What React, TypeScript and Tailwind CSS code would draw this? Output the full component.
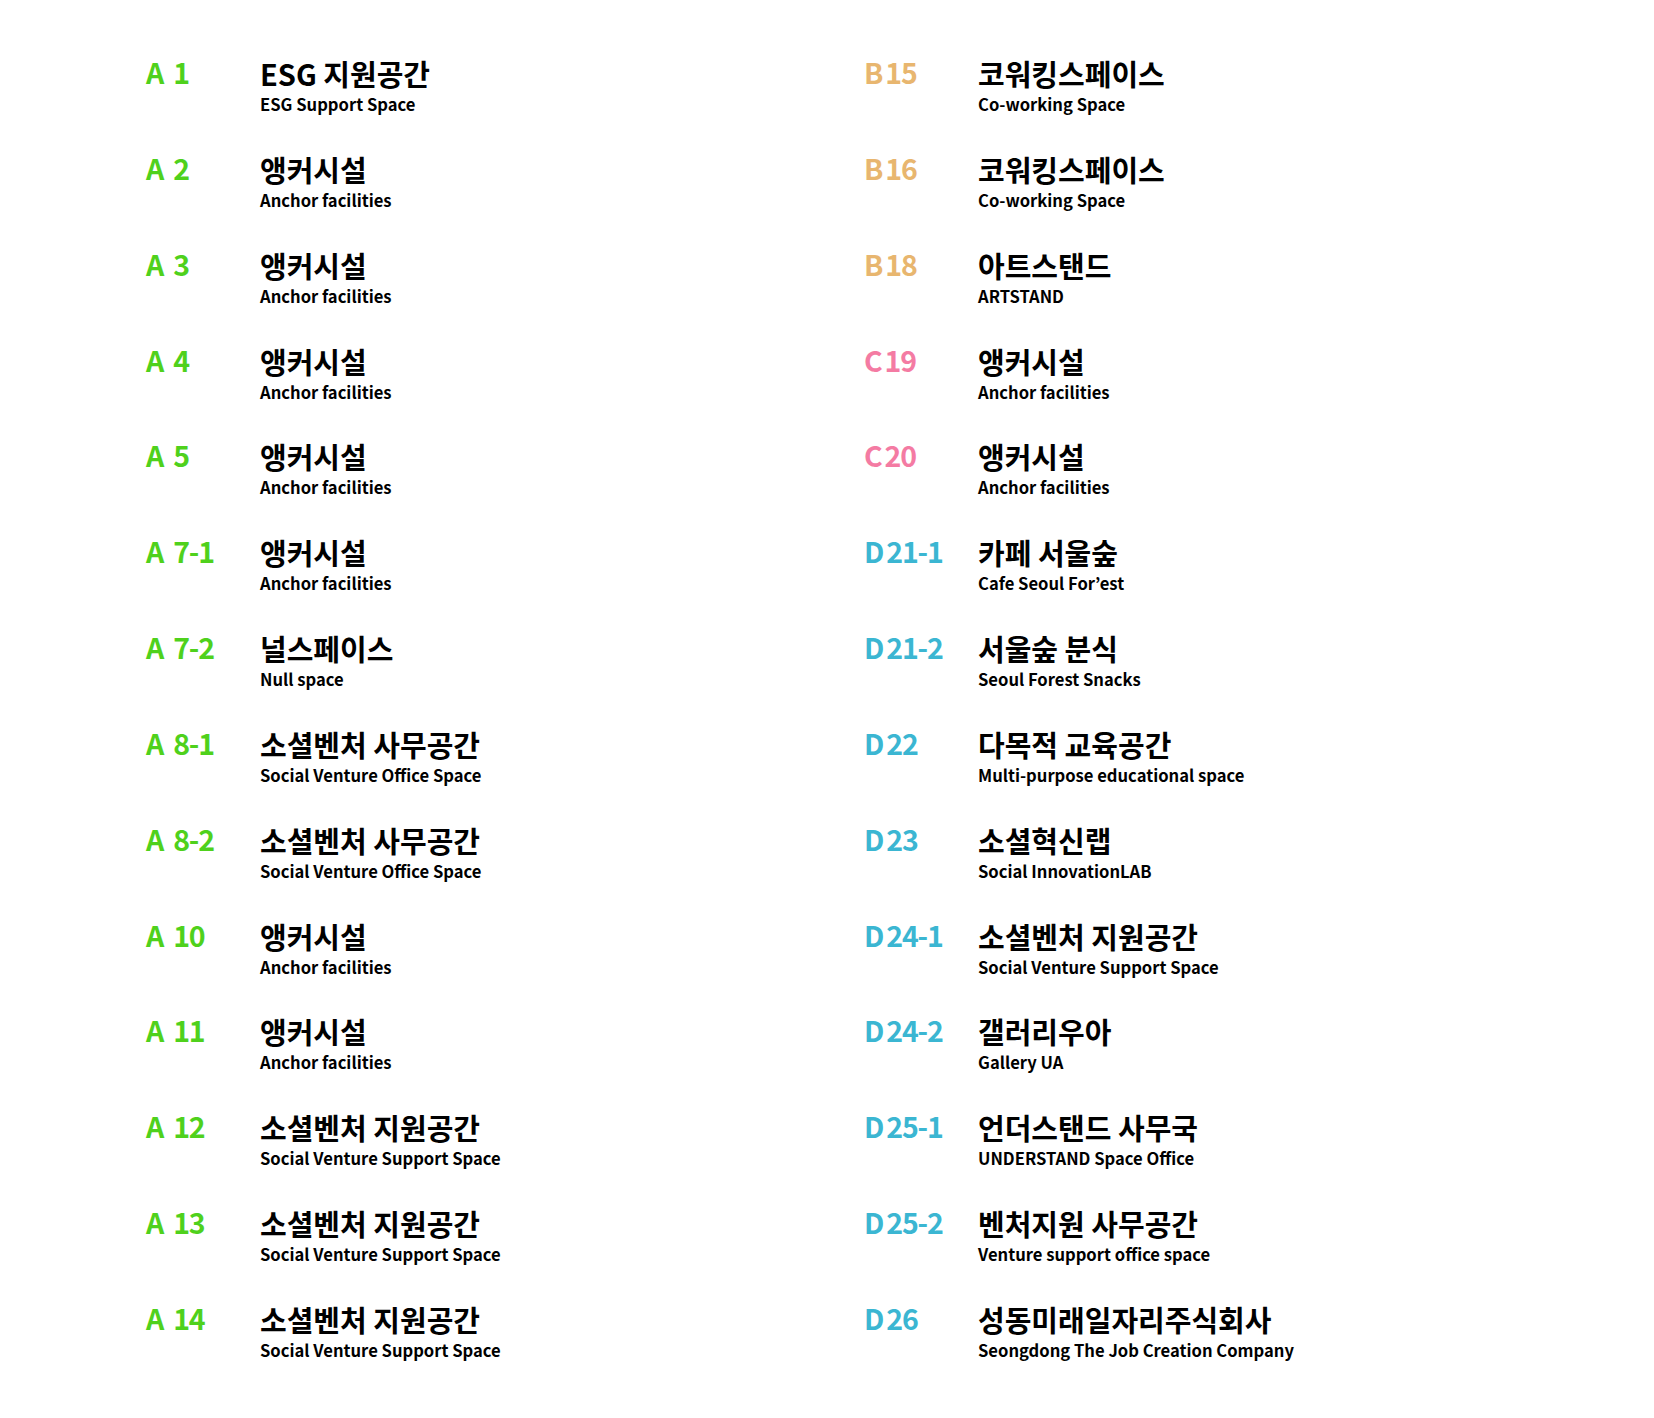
const LEFT = [
  { code: "A", num: "1", ko: "ESG 지원공간", en: "ESG Support Space" },
  { code: "A", num: "2", ko: "앵커시설", en: "Anchor facilities" },
  { code: "A", num: "3", ko: "앵커시설", en: "Anchor facilities" },
  { code: "A", num: "4", ko: "앵커시설", en: "Anchor facilities" },
  { code: "A", num: "5", ko: "앵커시설", en: "Anchor facilities" },
  { code: "A", num: "7-1", ko: "앵커시설", en: "Anchor facilities" },
  { code: "A", num: "7-2", ko: "널스페이스", en: "Null space" },
  { code: "A", num: "8-1", ko: "소셜벤처 사무공간", en: "Social Venture Office Space" },
  { code: "A", num: "8-2", ko: "소셜벤처 사무공간", en: "Social Venture Office Space" },
  { code: "A", num: "10", ko: "앵커시설", en: "Anchor facilities" },
  { code: "A", num: "11", ko: "앵커시설", en: "Anchor facilities" },
  { code: "A", num: "12", ko: "소셜벤처 지원공간", en: "Social Venture Support Space" },
  { code: "A", num: "13", ko: "소셜벤처 지원공간", en: "Social Venture Support Space" },
  { code: "A", num: "14", ko: "소셜벤처 지원공간", en: "Social Venture Support Space" },
];

const RIGHT = [
  { code: "B", num: "15", ko: "코워킹스페이스", en: "Co-working Space" },
  { code: "B", num: "16", ko: "코워킹스페이스", en: "Co-working Space" },
  { code: "B", num: "18", ko: "아트스탠드", en: "ARTSTAND" },
  { code: "C", num: "19", ko: "앵커시설", en: "Anchor facilities" },
  { code: "C", num: "20", ko: "앵커시설", en: "Anchor facilities" },
  { code: "D", num: "21-1", ko: "카페 서울숲", en: "Cafe Seoul For’est" },
  { code: "D", num: "21-2", ko: "서울숲 분식", en: "Seoul Forest Snacks" },
  { code: "D", num: "22", ko: "다목적 교육공간", en: "Multi-purpose educational space" },
  { code: "D", num: "23", ko: "소셜혁신랩", en: "Social InnovationLAB" },
  { code: "D", num: "24-1", ko: "소셜벤처 지원공간", en: "Social Venture Support Space" },
  { code: "D", num: "24-2", ko: "갤러리우아", en: "Gallery UA" },
  { code: "D", num: "25-1", ko: "언더스탠드 사무국", en: "UNDERSTAND Space Office" },
  { code: "D", num: "25-2", ko: "벤처지원 사무공간", en: "Venture support office space" },
  { code: "D", num: "26", ko: "성동미래일자리주식회사", en: "Seongdong The Job Creation Company" },
];

const codeColor: Record<string, string> = {
  A: "text-[#4fd11c]",
  B: "text-[#e8b66f]",
  C: "text-[#f47ba3]",
  D: "text-[#3bb6d2]",
};

function Row({ item }: { item: (typeof LEFT)[number] }) {
  const gap = item.code === "A" ? "mr-[10px]" : "mr-[3px]";
  return (
    <div className="flex h-[95.85px]">
      <div className={`w-[114px] shrink-0 text-[28.5px] leading-[36px] font-bold tracking-[-0.04em] ${codeColor[item.code]}`}>
        <span className={gap}>{item.code}</span>
        <span>{item.num}</span>
      </div>
      <div className="flex flex-col">
        <div className="text-[29px] leading-[38px] font-bold text-black">{item.ko}</div>
        <div className="text-[16.6px] leading-[18px] font-bold text-black mt-[3px]">{item.en}</div>
      </div>
    </div>
  );
}

export default function App() {
  return (
    <div
      className="w-[1654px] h-[1418px] bg-white"
      style={{ fontFamily: '"Noto Sans CJK KR", "Noto Sans", sans-serif' }}
    >
      <div className="grid grid-cols-[718px_1fr] pl-[146px] pt-[54px]">
        <div className="flex flex-col">
          {LEFT.map((it, i) => (
            <Row key={i} item={it} />
          ))}
        </div>
        <div className="flex flex-col">
          {RIGHT.map((it, i) => (
            <Row key={i} item={it} />
          ))}
        </div>
      </div>
    </div>
  );
}
